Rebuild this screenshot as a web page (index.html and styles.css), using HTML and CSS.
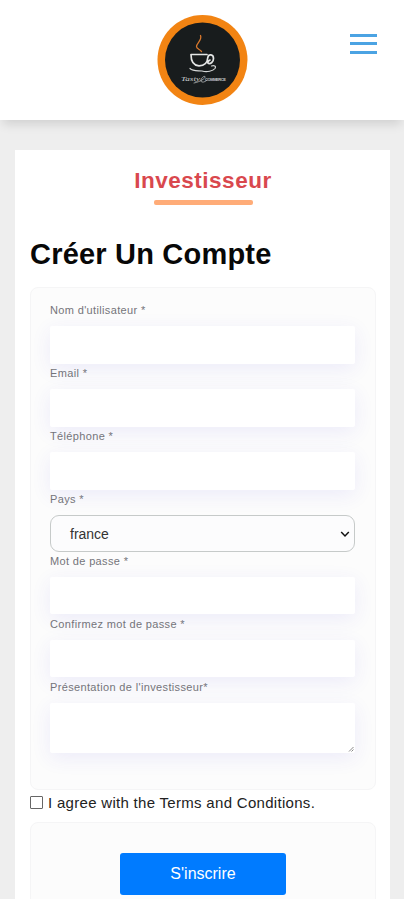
FILE: index.html
```html
<!DOCTYPE html>
<html lang="fr">
<head>
<meta charset="utf-8">
<title>Investisseur</title>
<link rel="stylesheet" href="styles.css">
</head>
<body>
<header class="header">
  <svg class="logo" viewBox="0 0 92 92" aria-label="Logo">
    <circle cx="46.500" cy="46" r="45" fill="#f28413"/>
    <circle cx="46.500" cy="46" r="37.500" fill="#181c1d"/>
    <g fill="none" stroke-linecap="round" stroke-linejoin="round">
      <path d="M44.500 21.500C46.500 26 40.500 29 40.500 32.500C40.500 35 43.500 35 45.500 37.500" stroke="#d9782c" stroke-width="1.300"/>
      <path d="M51 40.500H35C35 47 37.500 51.500 43 51.800C48.500 51.800 51.500 48.500 51.800 43.500C52.500 39.500 57.500 40 57.500 44.500C57.500 48 54.500 50 52.500 49.500C51 49 52.500 46.500 54 46" stroke="#e4e6e6" stroke-width="1.700"/>
      <path d="M34 54.500C37 57.500 42 56.500 46 57C51 58.500 57 57 59 54.500C60.500 52 58 51 55.500 52" stroke="#d4d6d6" stroke-width="1.200"/>
      <path d="M38 69C44 68 50 64 49 62.500C47 61.500 43 67 46 68C48 68.500 50 67 51 66" stroke="#c9cccc" stroke-width="0.700"/>
    </g>
    <text class="logo-script" x="25" y="67" textLength="19" lengthAdjust="spacingAndGlyphs">Tasty</text>
    <text class="logo-name" x="49" y="66.500" textLength="21">COMMERCE</text>
  </svg>
  <button class="menu" aria-label="Menu"><span></span><span></span><span></span></button>
</header>
<main class="card">
  <h2 class="title">Investisseur</h2>
  <h1 class="heading">Créer Un Compte</h1>
  <form>
    <section class="panel fields">
      <label class="field"><span>Nom d'utilisateur *</span><input type="text"></label>
      <label class="field"><span>Email *</span><input type="email"></label>
      <label class="field"><span>Téléphone *</span><input type="tel"></label>
      <label class="field country"><span>Pays *</span>
        <span class="select"><b>france</b><svg viewBox="0 0 10 8"><path d="M1.200 2L5 6L8.800 2" fill="none" stroke="#111" stroke-width="1.500"/></svg></span>
      </label>
      <label class="field"><span>Mot de passe *</span><input type="password"></label>
      <label class="field"><span>Confirmez mot de passe *</span><input type="password"></label>
      <label class="field"><span>Présentation de l'investisseur*</span>
        <span class="area"><textarea></textarea><svg viewBox="0 0 6 6"><path d="M1 5.500L5.500 1M3.500 5.500L5.500 3.500" stroke="#888" stroke-width="1"/></svg></span>
      </label>
    </section>
    <label class="agree"><input type="checkbox"><span>I agree with the Terms and Conditions.</span></label>
    <section class="panel actions"><button class="submit" type="button">S'inscrire</button></section>
  </form>
</main>
</body>
</html>
```
FILE: styles.css
```css
* { box-sizing: border-box; }
html { height: 900px; overflow: hidden; background: #fff; }
body {
  margin: 0;
  height: 899px;
  overflow: hidden;
  background: #eee;
  font-family: "Liberation Sans", Arial, sans-serif;
}
.header {
  height: 120px;
  background: #fff;
  box-shadow: 0 7px 10px -3px rgba(0, 0, 0, .13);
  display: grid;
  grid-template-columns: 1fr 92px 1fr;
  padding: 14px 27px 0 26px;
}
.logo { grid-column: 2; width: 92px; height: 92px; }
.logo-script { font: italic 7px "Liberation Serif", serif; fill: #d0d3d3; }
.logo-name { font: bold 4px "Liberation Sans", sans-serif; fill: #c4c7c7; }
.menu {
  justify-self: end;
  width: 27px;
  margin: 20px 0 0;
  padding: 0;
  border: 0;
  background: none;
  display: flex;
  flex-direction: column;
  gap: 5.3px;
  height: 20px;
}
.menu span { height: 3px; width: 27px; background: #4ba3e3; }
.card { margin: 30px 14px 0 15px; height: 760px; background: #fff; padding: 18px 14px 0 15px; }
.title {
  margin: 0;
  font-size: 22.5px;
  line-height: 25px;
  letter-spacing: .5px;
  text-align: center;
  color: #d9484e;
}
.title::after {
  content: "";
  display: block;
  width: 99px;
  height: 5px;
  margin: 7px auto 0;
  border-radius: 2px;
  background: #ffac78;
}
.heading { margin: 32px 0 0; font-size: 29px; line-height: 34px; letter-spacing: .2px; color: #080808; }
.panel { border: 1px solid #f5f5f6; border-radius: 8px; background: #fcfcfc; }
.fields { margin-top: 16px; height: 503px; padding: 14px 20px 0 19px; }
.field { display: block; height: 63px; }
.field.country { height: 61.6px; }
.field > span:first-child {
  display: block;
  height: 24px;
  line-height: 17px;
  font-size: 11px;
  letter-spacing: .35px;
  color: #74747a;
  position: relative;
  z-index: 1;
}
.field input, .field textarea {
  display: block;
  width: 100%;
  height: 37.5px;
  padding: 0;
  border: 0;
  border-radius: 2px;
  background: #fff;
  box-shadow: 0 5px 20px rgba(70, 60, 220, .085);
}
.area { display: block; position: relative; }
.field textarea { height: 50px; resize: none; }
.area svg { position: absolute; right: 1px; bottom: 1px; width: 6px; height: 6px; }
.select {
  display: flex;
  align-items: center;
  justify-content: space-between;
  height: 37px;
  padding: 0 4px 0 19px;
  border: 1px solid #c6cac9;
  border-radius: 9px;
  background: #fcfcfd;
}
.select b { font-size: 14px; font-weight: 400; color: #333; }
.select svg { width: 10px; height: 8px; }
.agree { display: flex; align-items: center; height: 24px; margin-bottom: 8px; font-size: 15px; color: #222; letter-spacing: .3px; }
.agree input {
  appearance: none;
  width: 13px;
  height: 13px;
  margin: 1px 5px 0 0;
  border: 1px solid #666;
  border-radius: 1px;
  background: #fff;
}
.actions { height: 110px; padding-top: 30px; display: flex; justify-content: center; align-items: flex-start; }
.submit {
  width: 166px;
  height: 42px;
  border: 0;
  border-radius: 3px;
  background: #007bff;
  color: #fff;
  font: 16px "Liberation Sans", Arial, sans-serif;
}
```
